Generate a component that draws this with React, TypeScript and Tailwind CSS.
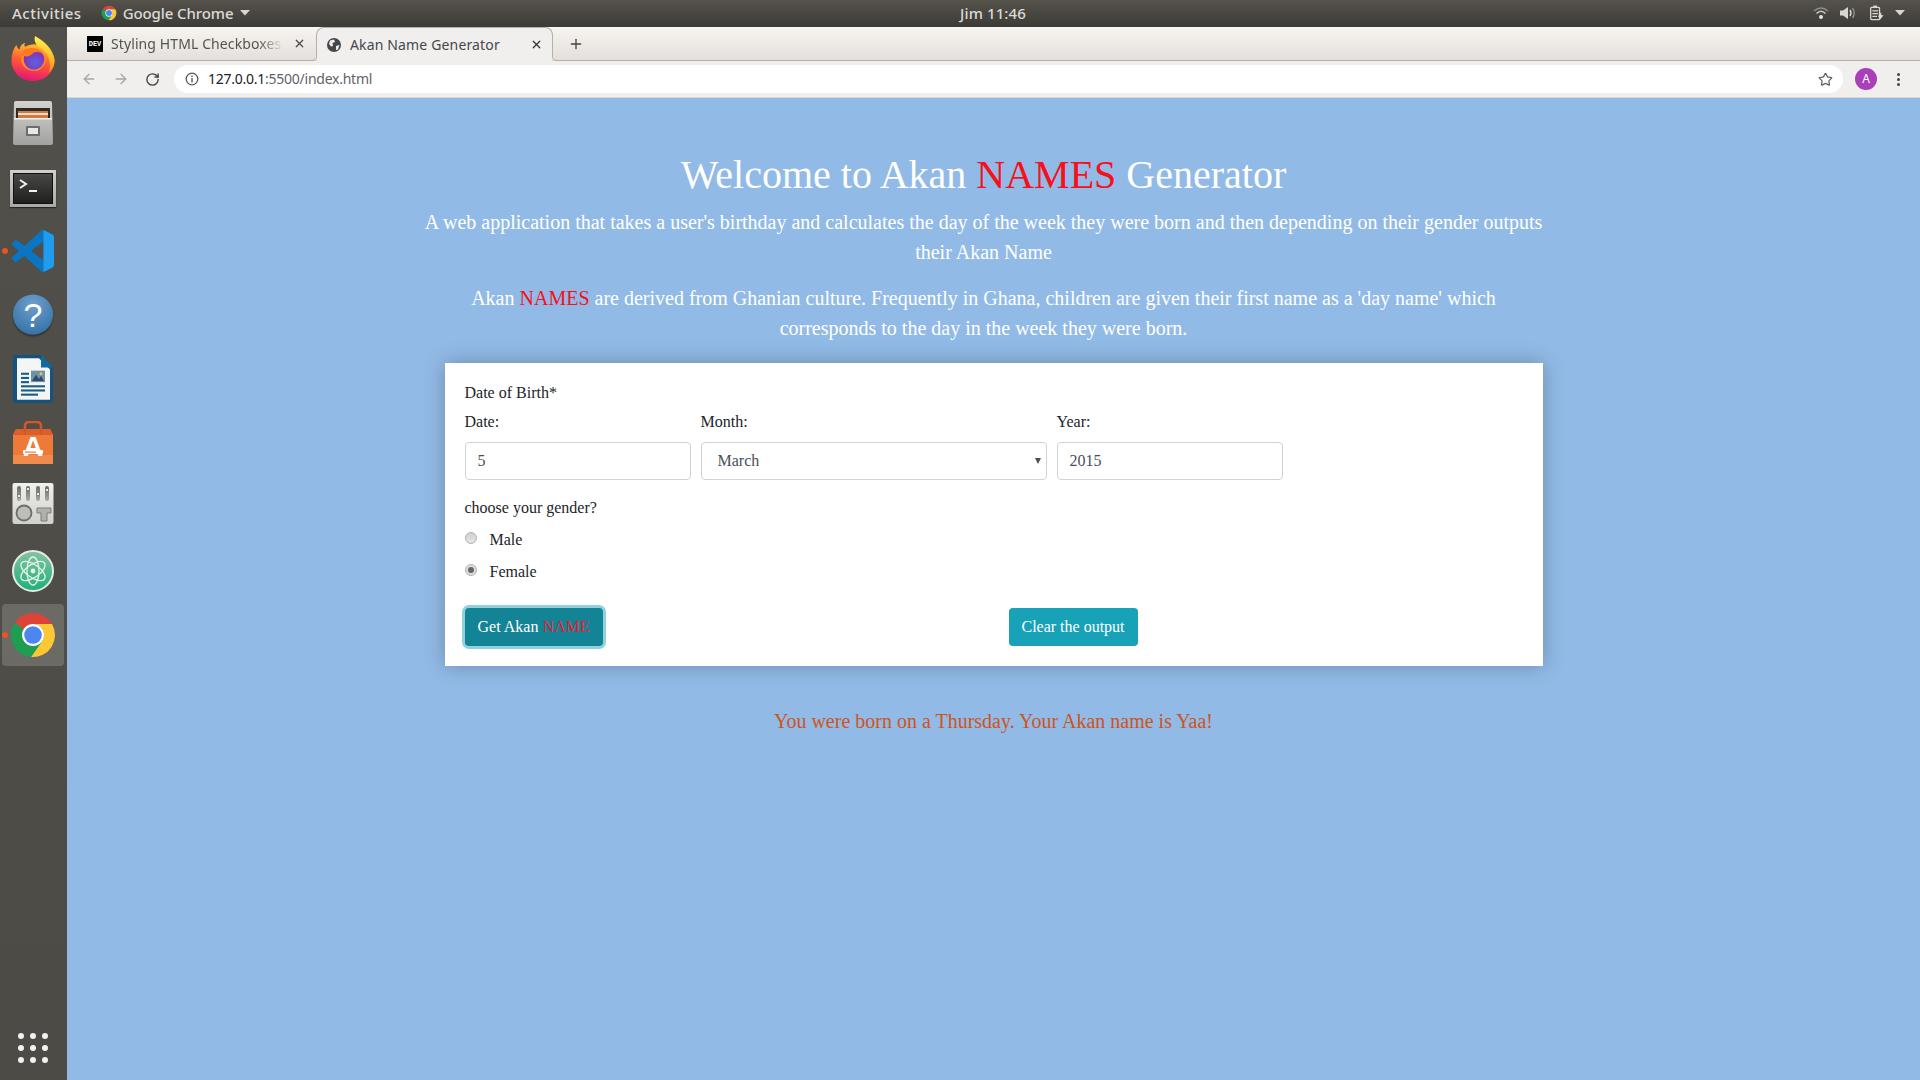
import React from "react";
import { ArrowLeft, ArrowRight, RotateCw, Star, X, Plus } from "lucide-react";

const ChromeLogo = ({ size }: { size: number }) => (
  <svg width={size} height={size} viewBox="0 0 48 48">
    <path d="M6 11.4A22 22 0 0 1 43 13L24 13A11 11 0 0 0 14.5 18.5Z" fill="#db4437" />
    <path d="M43 13A22 22 0 0 1 22 46L33.5 29.5A11 11 0 0 0 24 13Z" fill="#fcc934" />
    <path d="M22 46A22 22 0 0 1 6 11.4L14.5 18.5A11 11 0 0 0 33.5 29.5Z" fill="#1e9e50" />
    <circle cx="24" cy="24" r="11" fill="#fff" />
    <circle cx="24" cy="24" r="8.8" fill="#4b87ee" />
  </svg>
);

const Firefox = () => (
  <svg className="-translate-y-[1px]" width="46" height="47" viewBox="0 0 46 48">
    <defs>
      <linearGradient id="ff1" x1="0.6" y1="0.1" x2="0.4" y2="1">
        <stop offset="0" stopColor="#ffb52b" />
        <stop offset="0.45" stopColor="#ff5a34" />
        <stop offset="1" stopColor="#e6127a" />
      </linearGradient>
      <linearGradient id="ff2" x1="0.5" y1="0" x2="0.5" y2="1">
        <stop offset="0" stopColor="#fff24d" />
        <stop offset="0.7" stopColor="#ffb224" />
        <stop offset="1" stopColor="#ff7d1f" />
      </linearGradient>
      <radialGradient id="ff3" cx="0.55" cy="0.65" r="0.6">
        <stop offset="0" stopColor="#5d62e6" />
        <stop offset="1" stopColor="#8a2cb0" />
      </radialGradient>
    </defs>
    <path d="M23 47C10 47 1 37 1 26C1 20 3 14 6 10C6.500 12 7.500 14 9 15C10 11 12 9 15 8C14 10 14 11 15 12C20 9 28 8 33 12C38 15 45 18 45 26C45 37 36 47 23 47Z" fill="url(#ff1)" />
    <path d="M25 1C34 6 44 14 45 26C45 31 43 35 39 39C42 31 40 21 34 16C29 12 23 9 25 1Z" fill="url(#ff2)" />
    <path d="M11 24C12 16 20 12 27 14C34 16 37 22 35.500 28C33 35 27 38 20 36C14 34 10 29 11 24Z" fill="#ff8c22" />
    <circle cx="24" cy="25" r="10.500" fill="url(#ff3)" />
    <path d="M10 20C13 14 20 12 26 14C31 15 33 19 33 19C28 16.500 24 17 22 19.500C20 22.500 14 23 10 20Z" fill="#ff7a1d" />
  </svg>
);

const Files = () => (
  <svg width="42" height="44" viewBox="0 0 42 44">
    <defs>
      <linearGradient id="fc" x1="0" y1="0" x2="0" y2="1">
        <stop offset="0" stopColor="#d2d2cf" />
        <stop offset="1" stopColor="#a2a2a0" />
      </linearGradient>
    </defs>
    <path d="M2 2Q2 0 4 0H38Q40 0 40 2L41 42Q41 44 39 44H3Q1 44 1 42Z" fill="url(#fc)" />
    <path d="M4 7H38L38 17H4Z" fill="#2b2a28" />
    <path d="M6 10H36V17H6Z" fill="#cf7a3e" />
    <rect x="6" y="12" width="30" height="2" fill="#f2dcc6" />
    <rect x="2" y="17" width="38" height="1.500" fill="#efefed" />
    <rect x="14" y="25" width="14" height="10" rx="1" fill="#6d6d6b" />
    <rect x="16" y="27" width="10" height="6" fill="#e8e8e6" />
  </svg>
);

const Terminal = () => (
  <div className="w-[46px] h-[37px] translate-y-[1px] bg-[linear-gradient(#d0d0ce,#a9a9a7)] p-[3px] shadow-[0_1px_1px_rgba(0,0,0,0.5)]">
    <div className="w-full h-full bg-[linear-gradient(#484847,#1f1f1e)] border border-[#111]">
      <svg width="38" height="29" viewBox="0 0 38 29">
        <path d="M6 6L12 10L6 14" fill="none" stroke="#f2f2f2" strokeWidth="2" />
        <rect x="15" y="16" width="8" height="2" fill="#f2f2f2" />
      </svg>
    </div>
  </div>
);

const VSCode = () => (
  <svg width="42" height="42" viewBox="0 0 24 24">
    <path d="M23.15 2.587L18.21.21a1.494 1.494 0 0 0-1.705.29l-9.46 8.63-4.12-3.128a.999.999 0 0 0-1.276.057L.327 7.261A1 1 0 0 0 .326 8.74L3.899 12 .326 15.26a1 1 0 0 0 .001 1.479L1.65 17.94a.999.999 0 0 0 1.276.057l4.12-3.128 9.46 8.63a1.492 1.492 0 0 0 1.704.29l4.942-2.377A1.5 1.5 0 0 0 24 20.06V3.939a1.5 1.5 0 0 0-.85-1.352zm-5.146 14.861L10.826 12l7.178-5.448v10.896z" fill="#0a75c2" />
    <path d="M18 .06L23.15 2.587A1.5 1.5 0 0 1 24 3.94V20.06a1.5 1.5 0 0 1-.85 1.352L18 23.94Z" fill="#1f9cf0" />
  </svg>
);

const Help = () => (
  <div className="w-[40px] h-[40px] -translate-y-[0.5px] rounded-full bg-[radial-gradient(circle_at_50%_25%,#6f9fcc,#2a6aa3)] flex items-center justify-center shadow-[0_2px_2px_rgba(0,0,0,0.35)] text-white text-[34px] leading-none font-normal font-['Liberation_Sans',sans-serif]">
    ?
  </div>
);

const Writer = () => (
  <svg width="40" height="48" viewBox="0 0 40 46" preserveAspectRatio="none">
    <path d="M2 0H28L40 12V43Q40 46 37 46H3Q0 46 0 43V2Q0 0 2 0Z" fill="#15537f" />
    <path d="M4 3H26L37 14V43H4Z" fill="#f4f5f5" />
    <path d="M28 0L40 12H28Z" fill="#0f6aa0" />
    <g fill="#1a5b8a">
      <rect x="8" y="17" width="8" height="2" /><rect x="8" y="21" width="8" height="2" /><rect x="8" y="25" width="8" height="2" />
      <rect x="8" y="29" width="24" height="2" /><rect x="8" y="33" width="24" height="2" /><rect x="8" y="37" width="17" height="2" />
    </g>
    <rect x="18" y="15" width="14" height="11" fill="#6e93ab" />
    <path d="M19 25L23 19L26 23L28 20L31 25Z" fill="#2f4d5e" />
    <circle cx="28" cy="18" r="1.500" fill="#f5c542" />
  </svg>
);

const Store = () => (
  <div className="relative w-[42px] h-[44px]">
    <svg width="42" height="44" viewBox="0 0 42 44" className="absolute inset-0">
      <path d="M4 8H38L41 14V43H1V14Z" fill="#ef7a38" />
      <rect x="1" y="34" width="40" height="9" fill="#f08a4d" />
      <path d="M4 8H38L41 14H1Z" fill="#d9602a" />
      <path d="M13 14V5Q13 1 17 1H25Q29 1 29 5V14" fill="none" stroke="#d4562a" strokeWidth="2.500" />
    </svg>
    <div className="absolute inset-x-0 top-[11px] text-center text-white text-[28px] leading-[30px] font-bold font-['Liberation_Sans',sans-serif]">A</div>
    <svg width="42" height="44" viewBox="0 0 42 44" className="absolute inset-0">
      <rect x="11" y="29" width="20" height="4" rx="1" fill="#fff" />
      <rect x="13" y="30.500" width="11" height="1.200" fill="#ef7a38" />
    </svg>
  </div>
);

const Settings = () => (
  <svg width="42" height="42" viewBox="0 0 42 42">
    <defs>
      <linearGradient id="st" x1="0" y1="0" x2="0" y2="1">
        <stop offset="0" stopColor="#f0f0ed" />
        <stop offset="1" stopColor="#d0d0cc" />
      </linearGradient>
      <linearGradient id="sl" x1="0" y1="0" x2="0" y2="1">
        <stop offset="0" stopColor="#6a6a68" />
        <stop offset="1" stopColor="#a8a8a5" />
      </linearGradient>
    </defs>
    <rect x="0.500" y="0" width="41" height="41" rx="2" fill="url(#st)" />
    <g fill="url(#sl)">
      <rect x="5" y="3" width="4" height="15" rx="2" /><rect x="14" y="3" width="4" height="15" rx="2" />
      <rect x="24" y="3" width="4" height="15" rx="2" /><rect x="33" y="3" width="4" height="15" rx="2" />
    </g>
    <g fill="#f6f6f4" stroke="#555" strokeWidth="0.600">
      <circle cx="7" cy="13" r="1.600" /><circle cx="16" cy="6" r="1.600" /><circle cx="26" cy="11" r="1.600" /><circle cx="35" cy="7" r="1.600" />
    </g>
    <circle cx="12" cy="30" r="7.500" fill="#bcbcb9" stroke="#6c6c6a" strokeWidth="1.800" />
    <path d="M25 25H39V30H35V38H29V30H25Z" fill="#b0b0ad" stroke="#7c7c7a" />
  </svg>
);

const AtomIcon = () => (
  <svg width="42" height="42" viewBox="0 0 42 42">
    <defs>
      <linearGradient id="at" x1="0" y1="0" x2="0" y2="1">
        <stop offset="0" stopColor="#84c3a0" />
        <stop offset="1" stopColor="#1fb079" />
      </linearGradient>
    </defs>
    <circle cx="21" cy="21" r="20" fill="url(#at)" stroke="#e7ebe7" strokeWidth="2" />
    <g fill="none" stroke="#e5f3ea" strokeWidth="1.300">
      <ellipse cx="21" cy="21" rx="14" ry="6.500" transform="rotate(35 21 21)" />
      <ellipse cx="21" cy="21" rx="14" ry="6.500" transform="rotate(-35 21 21)" />
      <ellipse cx="21" cy="21" rx="14" ry="6" transform="rotate(90 21 21)" />
    </g>
    <circle cx="21" cy="21" r="2.400" fill="#e5f3ea" />
  </svg>
);

const DockItem = ({ children, running, active, lift }: { children: React.ReactNode; running?: boolean; active?: boolean; lift?: boolean }) => (
  <div className="relative h-16 w-full flex items-center justify-center pr-[1px]">
    {active && <div className="absolute left-[2px] right-[3px] top-[1px] bottom-[1px] rounded bg-[#6c6a65]" />}
    {running && <div className="absolute left-[2px] top-[29px] w-[6px] h-[6px] rounded-full bg-[#e95420]" />}
    <div className={lift ? "relative -translate-y-[3px]" : "relative"}>{children}</div>
  </div>
);

const StatusIcons = () => (
  <div className="flex items-center pr-[15px]">
    <svg width="16" height="14" viewBox="0 0 16 14" fill="none">
      <path d="M1 5Q8 -1 15 5" stroke="#8f8d88" strokeWidth="1.600" />
      <path d="M3.500 7.500Q8 3 12.500 7.500" stroke="#c8c6c1" strokeWidth="1.600" />
      <circle cx="8" cy="11" r="2" fill="#e6e4df" />
    </svg>
    <svg className="ml-[11px]" width="16" height="14" viewBox="0 0 16 14" fill="none">
      <path d="M0 4.500H3L8 1V13L3 9.500H0Z" fill="#d8d6d1" />
      <path d="M10 4Q12 7 10 10" stroke="#d8d6d1" strokeWidth="1.500" />
      <path d="M12.500 2Q16 7 12.500 12" stroke="#8f8d88" strokeWidth="1.500" />
    </svg>
    <svg className="ml-[14px]" width="14" height="16" viewBox="0 0 15 16" fill="none">
      <rect x="0.700" y="2" width="9.500" height="13" rx="1" stroke="#d8d6d1" strokeWidth="1.400" />
      <rect x="3.500" y="0" width="4" height="2" fill="#d8d6d1" />
      <rect x="2.500" y="5" width="6" height="1.300" fill="#d8d6d1" /><rect x="2.500" y="8" width="6" height="1.300" fill="#d8d6d1" /><rect x="2.500" y="11" width="5" height="1.300" fill="#d8d6d1" />
      <path d="M12 7L8.500 12H11L10 16L14.500 10.500H12Z" fill="#e6e4df" />
    </svg>
    <svg className="ml-[11px]" width="10" height="6" viewBox="0 0 10 6"><path d="M0 0H10L5 5.500Z" fill="#d8d6d1" /></svg>
  </div>
);

const PAGE = "font-['Liberation_Serif',serif]";

export default function App() {
  return (
    <div className="w-[1920px] h-[1080px] overflow-hidden flex flex-col bg-[#91bae6]">
      {/* GNOME top bar */}
      <div className="h-[27px] shrink-0 flex items-center justify-between pb-[1px] bg-[linear-gradient(#55524b,#3d3b37)] text-[#dcdad5] text-[15px] font-medium tracking-[0.1px] font-['Noto_Sans',sans-serif]">
        <div className="flex items-center w-[766px]">
          <span className="ml-[12px] tracking-[0.5px]">Activities</span>
          <span className="ml-[19px]"><ChromeLogo size={16} /></span>
          <span className="ml-[6px] tracking-[-0.1px]">Google Chrome</span>
          <svg className="ml-[7px]" width="10" height="6" viewBox="0 0 10 6"><path d="M0 0H10L5 5.500Z" fill="#d8d6d1" /></svg>
        </div>
        <span>Jim 11:46</span>
        <div className="w-[700px] flex justify-end"><StatusIcons /></div>
      </div>

      <div className="flex-1 flex min-h-0">
        {/* Dock */}
        <div className="w-[67px] shrink-0 flex flex-col bg-[linear-gradient(#52504a,#4e4d47_50%,#4c4b46)]">
          <DockItem><Firefox /></DockItem>
          <DockItem><Files /></DockItem>
          <DockItem><Terminal /></DockItem>
          <DockItem running><VSCode /></DockItem>
          <DockItem><Help /></DockItem>
          <DockItem><Writer /></DockItem>
          <DockItem><Store /></DockItem>
          <DockItem lift><Settings /></DockItem>
          <DockItem><AtomIcon /></DockItem>
          <DockItem running active><ChromeLogo size={48} /></DockItem>
          <div className="mt-auto mb-[17px] ml-[18px] grid grid-cols-[6px_6px_6px] gap-[6px]">
            {[0, 1, 2, 3, 4, 5, 6, 7, 8].map((i) => (
              <div key={i} className="w-[6px] h-[6px] rounded-full bg-[#f2f2f0]" />
            ))}
          </div>
        </div>

        {/* Browser */}
        <div className="flex-1 flex flex-col min-w-0">
          <div className="h-[34px] shrink-0 flex items-end bg-[linear-gradient(#f7f5f1,#e4dfda)] border-b border-[#b5b0aa] text-[14px] text-[#3c4043] font-['Noto_Sans',sans-serif]">
            <div className="w-[249px] h-[33px] flex items-center pl-[20px] pr-[10px]">
              <div className="w-[16px] h-[16px] shrink-0 bg-black text-white text-[7px] leading-[16px] text-center font-bold font-['Liberation_Mono',monospace]">DEV</div>
              <span className="ml-[8px] w-[173px] overflow-hidden whitespace-nowrap tracking-[0.1px] text-[#55534f] [mask-image:linear-gradient(90deg,#000_85%,transparent)]">Styling HTML Checkboxes</span>
              <X className="ml-auto shrink-0 text-[#4a4a4a]" size={13} strokeWidth={2.200} />
            </div>
            <div className="relative -mb-px w-[237px] h-[34px] flex items-center pl-[10px] pr-[9px] bg-[#f1efed] border border-b-0 border-[#b5b0aa] rounded-t-lg">
              <svg className="absolute -left-[5px] bottom-0" width="5" height="6" viewBox="0 0 5 6" fill="none">
                <path d="M5 0Q5 5 0 5.500H5Z" fill="#f1efed" />
                <path d="M5 0Q5 5 0 5.500" stroke="#b5b0aa" />
              </svg>
              <svg className="absolute -right-[5px] bottom-0" width="5" height="6" viewBox="0 0 5 6" fill="none">
                <path d="M0 0Q0 5 5 5.500H0Z" fill="#f1efed" />
                <path d="M0 0Q0 5 5 5.500" stroke="#b5b0aa" />
              </svg>
              <svg className="shrink-0" width="14" height="14" viewBox="0 0 14 14">
                <circle cx="7" cy="7" r="7" fill="#45474a" />
                <path d="M3 2.500L7 1.500L8 4L5.500 5L6 8L4 8.500L2 6Z" fill="#f1efed" />
                <path d="M9 8L12.500 7L11 11.500L9 12Z" fill="#f1efed" />
              </svg>
              <span className="ml-[9px] text-[#45474a] tracking-[0.15px] whitespace-nowrap">Akan Name Generator</span>
              <X className="ml-auto shrink-0 text-[#333]" size={13} strokeWidth={2.200} />
            </div>
            <div className="h-[33px] flex items-center ml-[15px]">
              <Plus className="text-[#444]" size={16} strokeWidth={2} />
            </div>
          </div>

          <div className="h-[37px] shrink-0 flex items-center bg-[#f1efed] border-b border-[#d9d6d2]">
            <ArrowLeft className="ml-[14px] text-[#a6a6a6]" size={16} strokeWidth={2} />
            <ArrowRight className="ml-[16px] text-[#a6a6a6]" size={16} strokeWidth={2} />
            <RotateCw className="ml-[16px] text-[#444]" size={15} strokeWidth={2.200} />
            <div className="ml-[14px] flex-1 h-[28px] rounded-full bg-white flex items-center pl-[11px] pr-[10px]">
              <svg width="14" height="14" viewBox="0 0 14 14" fill="none">
                <circle cx="7" cy="7" r="5.800" stroke="#5a5a5a" strokeWidth="1.300" />
                <rect x="6.300" y="6" width="1.400" height="4.500" fill="#5a5a5a" />
                <rect x="6.300" y="3.500" width="1.400" height="1.500" fill="#5a5a5a" />
              </svg>
              <span className="ml-[9px] -mt-[2px] text-[14px] tracking-[-0.25px] text-[#202124] font-['Noto_Sans',sans-serif]">
                127.0.0.1<span className="text-[#5f6368]">:5500/index.html</span>
              </span>
              <Star className="ml-auto text-[#5f6368]" size={15} strokeWidth={2} />
            </div>
            <div className="ml-[12px] w-[22px] h-[22px] rounded-full bg-[#a93fb9] text-white text-[12px] leading-[22px] text-center font-['Noto_Sans',sans-serif]">A</div>
            <div className="ml-[20px] mr-[20px] flex flex-col gap-[2px]">
              <div className="w-[3px] h-[3px] rounded-full bg-[#444]" />
              <div className="w-[3px] h-[3px] rounded-full bg-[#444]" />
              <div className="w-[3px] h-[3px] rounded-full bg-[#444]" />
            </div>
          </div>

          {/* Page */}
          <div className={`flex-1 flex flex-col items-center text-[#212529] ${PAGE}`}>
            <div className="w-[1140px] mr-[20px] pt-[53px] text-center text-white">
              <h1 className="text-[40px] leading-[48px] mb-2">
                Welcome to Akan <span className="text-[#f90f1c]">NAMES</span> Generator
              </h1>
              <p className="text-[20px] leading-[30px] mb-4 px-[10px]">
                A web application that takes a user's birthday and calculates the day of the week they were born and then depending on their gender outputs their Akan Name
              </p>
              <p className="text-[20px] leading-[30px] mb-[20px] px-[50px]">
                Akan <span className="text-[#f90f1c]">NAMES</span> are derived from Ghanian culture. Frequently in Ghana, children are given their first name as a 'day name' which corresponds to the day in the week they were born.
              </p>
            </div>

            <div className="w-[1098px] h-[303px] bg-white shadow-[0_0_20px_rgba(0,0,0,0.25)] pt-[18px] px-[20px] text-[16px] leading-[24px]">
              <div>Date of Birth*</div>
              <div className="mt-[5px] flex gap-[10px]">
                <div className="w-[226px]">
                  <div className="mb-[8px]">Date:</div>
                  <input readOnly value="5" className="w-full h-[38px] border border-[#ced4da] rounded px-[12px] text-[#495057] outline-none" />
                </div>
                <div className="w-[346px]">
                  <div className="mb-[8px]">Month:</div>
                  <div className="relative">
                    <select defaultValue="March" className="appearance-none w-full h-[38px] border border-[#ced4da] rounded pl-[16px] text-[#495057] bg-white outline-none">
                      <option>March</option>
                    </select>
                    <svg className="absolute right-[6px] top-[16px]" width="6" height="6" viewBox="0 0 6 6"><path d="M0 0H6L3 6Z" fill="#495057" /></svg>
                  </div>
                </div>
                <div className="w-[226px]">
                  <div className="mb-[8px]">Year:</div>
                  <input readOnly value="2015" className="w-full h-[38px] border border-[#ced4da] rounded px-[12px] text-[#495057] outline-none" />
                </div>
              </div>

              <div className="mt-[16px]">choose your gender?</div>
              <div className="mt-[8px] flex items-center h-[24px]">
                <span className="w-[12px] h-[12px] rounded-full border border-[#b3b3b3] bg-[linear-gradient(#d0d0d0,#e6e6e6)] -translate-y-[2px]" />
                <span className="ml-[13px]">Male</span>
              </div>
              <div className="mt-[8px] flex items-center h-[24px]">
                <span className="w-[12px] h-[12px] rounded-full border border-[#b3b3b3] bg-[#dcdcdc] flex items-center justify-center -translate-y-[2px]">
                  <span className="w-[6px] h-[6px] rounded-full bg-[#666]" />
                </span>
                <span className="ml-[13px]">Female</span>
              </div>

              <div className="mt-[24px] flex">
                <button className="w-[138px] h-[38px] rounded bg-[#138496] text-white ring-[3px] ring-[#8fd1dc]">
                  Get Akan <span className="text-[#ed1c2e]">NAME</span>
                </button>
                <button className="ml-[406px] w-[129px] h-[38px] rounded bg-[#17a2b8] text-white">Clear the output</button>
              </div>
            </div>

            <div className="mt-[40px] text-[20px] leading-[30px] text-[#d0541a]">
              You were born on a Thursday. Your Akan name is Yaa!
            </div>
          </div>
        </div>
      </div>
    </div>
  );
}
